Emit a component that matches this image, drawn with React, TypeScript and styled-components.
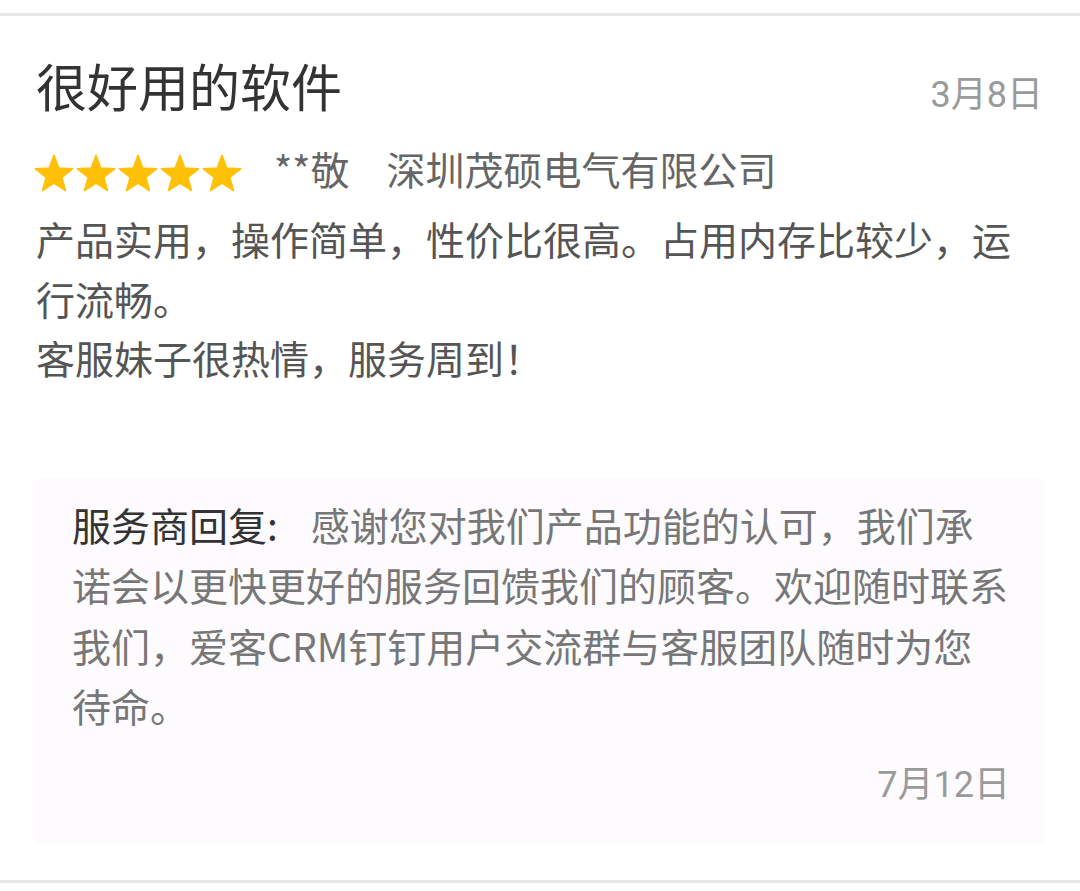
import React from "react";
import styled, { createGlobalStyle } from "styled-components";

const GlobalStyle = createGlobalStyle`
  html, body {
    margin: 0;
    padding: 0;
    background: #ffffff;
  }
  body {
    font-family: "Noto Sans CJK SC", "Noto Sans", sans-serif;
    -webkit-font-smoothing: antialiased;
  }
`;

const Page = styled.div`
  padding-top: 13px;
  width: 1080px;
`;

const Card = styled.article`
  border-top: 3px solid #e6e6e6;
  border-bottom: 3px solid #e6e6e6;
  padding: 39px 36px 37px 36px;
`;

const Header = styled.header`
  display: flex;
  justify-content: space-between;
  align-items: baseline;
  height: 60px;
`;

const Title = styled.h1`
  margin: 0;
  font-size: 51px;
  font-weight: 400;
  line-height: 60px;
  color: #333333;
`;

const DateText = styled.span`
  font-family: Roboto, "Noto Sans CJK SC", sans-serif;
  font-size: 36px;
  line-height: 48px;
  color: #9a9a9a;
  white-space: nowrap;
`;

const HeaderDate = styled(DateText)`
  margin-right: 1px;
`;

const MetaRow = styled.div`
  display: flex;
  align-items: flex-start;
  height: 50px;
  margin-top: 28px;
`;

const Stars = styled.div`
  display: flex;
  margin-top: 10px;
  margin-left: -3px;
`;

const StarSvg = styled.svg`
  display: block;
  width: 42px;
  height: 42px;
`;

const MetaText = styled.span<{ $gap: number }>`
  font-size: 39px;
  line-height: 50px;
  color: #666666;
  margin-left: ${(p) => p.$gap}px;
  white-space: nowrap;
`;

const Body = styled.p`
  margin: 16px 0 0 0;
  font-size: 39px;
  line-height: 59.5px;
  color: #555555;
  white-space: pre-line;
`;

const Reply = styled.section`
  margin-top: 90px;
  background: #fdfbfe;
  padding: 16px 34px 34px 36px;
`;

const ReplyText = styled.p`
  margin: 0;
  font-size: 39px;
  line-height: 60.5px;
  color: #777777;
  width: 938px;
`;

const ReplyLabel = styled.span`
  color: #333333;
  margin-right: 33px;
`;

const ReplyFooter = styled.div`
  display: flex;
  justify-content: flex-end;
  margin-top: 25px;
`;

const starPoints = (() => {
  const cx = 21;
  const cy = 21.8;
  const R = 19.5;
  const r = R * 0.42;
  const pts: string[] = [];
  for (let i = 0; i < 10; i++) {
    const rad = i % 2 === 0 ? R : r;
    const a = (-90 + i * 36) * (Math.PI / 180);
    pts.push(`${(cx + rad * Math.cos(a)).toFixed(2)},${(cy + rad * Math.sin(a)).toFixed(2)}`);
  }
  return pts.join(" ");
})();

const Star: React.FC = () => (
  <StarSvg viewBox="0 0 42 42" aria-hidden="true">
    <polygon
      points={starPoints}
      fill="#FFC107"
      stroke="#FFC107"
      strokeWidth={1.6}
      strokeLinejoin="round"
    />
  </StarSvg>
);

export default function App() {
  return (
    <>
      <GlobalStyle />
      <Page>
        <Card>
          <Header>
            <Title>很好用的软件</Title>
            <HeaderDate>3月8日</HeaderDate>
          </Header>
          <MetaRow>
            <Stars>
              {[0, 1, 2, 3, 4].map((i) => (
                <Star key={i} />
              ))}
            </Stars>
            <MetaText $gap={31}>**敬</MetaText>
            <MetaText $gap={37}>深圳茂硕电气有限公司</MetaText>
          </MetaRow>
          <Body>
            {"产品实用，操作简单，性价比很高。占用内存比较少，运行流畅。\n客服妹子很热情，服务周到！"}
          </Body>
          <Reply>
            <ReplyText>
              <ReplyLabel>服务商回复:</ReplyLabel>
              感谢您对我们产品功能的认可，我们承诺会以更快更好的服务回馈我们的顾客。欢迎随时联系我们，爱客CRM钉钉用户交流群与客服团队随时为您待命。
            </ReplyText>
            <ReplyFooter>
              <DateText>7月12日</DateText>
            </ReplyFooter>
          </Reply>
        </Card>
      </Page>
    </>
  );
}
